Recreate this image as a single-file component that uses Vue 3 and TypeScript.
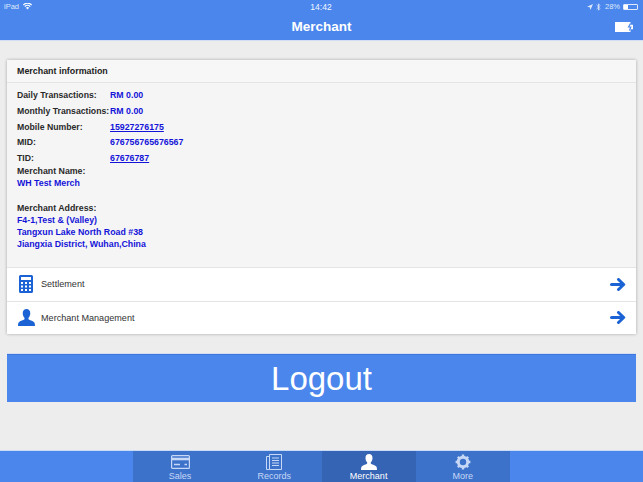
<template>
  <div class="page">
    <header class="topbar">
      <div class="status">
        <div class="status-left">
          <span>iPad</span>
          <svg class="wifi" viewBox="0 0 12 9" width="9" height="7">
            <path d="M6 8.600 3.900 6.200a3 3 0 0 1 4.200 0zM2.900 5.200 1.800 4a6 6 0 0 1 8.400 0L9.100 5.200a4.400 4.400 0 0 0-6.200 0zM.9 3 0 1.900a8.500 8.500 0 0 1 12 0L11.100 3a7.200 7.200 0 0 0-10.200 0z" fill="#fff" />
          </svg>
        </div>
        <span class="status-time">14:42</span>
        <div class="status-right">
          <svg viewBox="0 0 8 8" width="6" height="6"><path d="M8 0 4.500 8 3.700 4.300 0 3.500z" fill="#dfe9fb" /></svg>
          <svg class="bt" viewBox="0 0 6 10" width="5" height="8"><path d="M.6 2.500 5 6.800 3 9V1l2 2.200L.6 7.500" fill="none" stroke="#dfe9fb" stroke-width="1" /></svg>
          <span>28%</span>
          <span class="batt"><i class="batt-fill"></i></span>
        </div>
      </div>
      <div class="nav">
        <h1>Merchant</h1>
        <svg class="nav-batt" viewBox="0 0 18 10" width="18" height="10">
          <path d="M0 0h15.500v2.800H18v4.400h-2.500V10H0z" fill="#fff" />
          <path d="M15.500 1.500 13.600 5h2.200l-1.300 3.500" fill="none" stroke="#4a86ec" stroke-width="1.200" />
        </svg>
      </div>
    </header>

    <main class="content">
      <section class="card">
        <div class="card-title">Merchant information</div>
        <div class="info">
          <div v-for="row in infoRows" :key="row.label" class="info-row">
            <span class="info-label">{{ row.label }}</span>
            <a v-if="row.link" class="info-value link">{{ row.value }}</a>
            <span v-else class="info-value">{{ row.value }}</span>
          </div>
          <div class="block">
            <div class="block-line dark">Merchant Name:</div>
            <div class="block-line blue">WH Test Merch</div>
          </div>
          <div class="block address">
            <div class="block-line dark">Merchant Address:</div>
            <div v-for="line in addressLines" :key="line" class="block-line blue">{{ line }}</div>
          </div>
        </div>
        <div class="action">
          <span class="action-slot">
            <svg viewBox="0 0 14 18" width="14" height="18">
              <path fill-rule="evenodd" fill="#1b62d4" d="M1.500 0h11A1.500 1.500 0 0 1 14 1.500v15a1.500 1.500 0 0 1-1.500 1.500h-11A1.500 1.500 0 0 1 0 16.500v-15A1.500 1.500 0 0 1 1.500 0zM2 2v3h10V2zM2 7v2h2V7zm4 0v2h2V7zm4 0v2h2V7zM2 10.500v2h2v-2zm4 0v2h2v-2zm4 0v2h2v-2zM2 14v2h2v-2zm4 0v2h2v-2zm4 0v2h2v-2z" />
            </svg>
          </span>
          <span class="action-text">Settlement</span>
          <svg viewBox="0 0 16 13" width="16" height="13">
            <path d="M1.500 6.500h11M8.500 1.500l5.200 5-5.200 5" fill="none" stroke="#1b62d4" stroke-width="3" stroke-linecap="round" stroke-linejoin="round" />
          </svg>
        </div>
        <div class="action">
          <span class="action-slot">
            <svg viewBox="0 0 18 18" width="17" height="17">
              <path fill="#1b62d4" d="M9 0c2.500 0 4 1.800 4 4.400 0 2-.8 3.700-1.800 4.800-.3.900-.1 1.700.6 2.200 1.400.8 4.400 1.300 5.500 2.800.4.600.7 2 .7 3.800H0c0-1.800.3-3.200.7-3.800 1.100-1.500 4.100-2 5.500-2.800.7-.5.900-1.300.6-2.200C5.800 8.100 5 6.400 5 4.400 5 1.800 6.500 0 9 0z" />
            </svg>
          </span>
          <span class="action-text">Merchant Management</span>
          <svg viewBox="0 0 16 13" width="16" height="13">
            <path d="M1.500 6.500h11M8.500 1.500l5.200 5-5.200 5" fill="none" stroke="#1b62d4" stroke-width="3" stroke-linecap="round" stroke-linejoin="round" />
          </svg>
        </div>
      </section>

      <button class="logout" type="button">Logout</button>
    </main>

    <footer class="tabbar">
      <div class="tabs">
        <div v-for="tab in tabs" :key="tab" class="tab" :class="{ active: tab === 'Merchant' }">
          <span class="tab-icon">
            <svg v-if="tab === 'Sales'" viewBox="0 0 19 14" width="19" height="14">
              <rect x=".6" y=".6" width="17.800" height="12.800" rx="1" fill="none" stroke="#c6d8f6" stroke-width="1.200" />
              <path d="M1 4h17" stroke="#c6d8f6" stroke-width="2.600" />
              <path d="M3 9.500h6M13.500 9.500H16" stroke="#c6d8f6" stroke-width="1.300" />
            </svg>
            <svg v-else-if="tab === 'Records'" viewBox="0 0 16 16" width="16" height="16">
              <path fill="none" stroke="#c6d8f6" stroke-width="1" d="M3.500.5h12v15h-12zM3.500 2.500H.5v13h3" />
              <path fill="none" stroke="#c6d8f6" stroke-width="1.200" d="M6 4h7M6 6.500h7M6 9h7M6 11.500h7" />
            </svg>
            <svg v-else-if="tab === 'Merchant'" viewBox="0 0 16 16" width="16" height="16">
              <path fill="#fff" d="M8 0c2.200 0 3.500 1.600 3.500 3.900 0 1.800-.7 3.300-1.600 4.300-.3.800-.1 1.500.5 1.900 1.200.7 3.900 1.200 4.900 2.500.4.500.7 1.700.7 3.400H0c0-1.700.3-2.900.7-3.400 1-1.300 3.700-1.800 4.900-2.500.6-.4.800-1.100.5-1.900C5.200 7.200 4.500 5.700 4.500 3.900 4.500 1.600 5.800 0 8 0z" />
            </svg>
            <svg v-else viewBox="0 0 16 16" width="16" height="16">
              <circle cx="8" cy="8" r="4.700" fill="none" stroke="#c6d8f6" stroke-width="3" />
              <path d="M8 .6v2M8 13.400v2M.6 8h2M13.400 8h2M2.800 2.800l1.400 1.400M11.800 11.800l1.400 1.400M2.800 13.200l1.400-1.400M11.800 4.200l1.400-1.400" stroke="#c6d8f6" stroke-width="2.400" />
            </svg>
          </span>
          <span class="tab-label">{{ tab }}</span>
        </div>
      </div>
    </footer>
  </div>
</template>

<script setup lang="ts">
interface InfoRow {
  label: string
  value: string
  link?: boolean
}

const infoRows: InfoRow[] = [
  { label: 'Daily Transactions:', value: 'RM 0.00' },
  { label: 'Monthly Transactions:', value: 'RM 0.00' },
  { label: 'Mobile Number:', value: '15927276175', link: true },
  { label: 'MID:', value: '676756765676567' },
  { label: 'TID:', value: '67676787', link: true }
]

const addressLines = ['F4-1,Test & (Valley)', 'Tangxun Lake North Road #38', 'Jiangxia District, Wuhan,China']

const tabs = ['Sales', 'Records', 'Merchant', 'More']
</script>

<style>
html,
body {
  margin: 0;
  background: #ededed;
}
</style>

<style scoped>
.page {
  width: 643px;
  height: 482px;
  display: flex;
  flex-direction: column;
  overflow: hidden;
  background: #ededed;
  font-family: 'Liberation Sans', Arial, sans-serif;
}

.topbar {
  height: 41px;
  flex-shrink: 0;
  box-sizing: border-box;
  background: #4a86ec;
  border-bottom: 1px solid #d2def2;
  color: #fff;
}

.status {
  height: 13px;
  padding: 0 5px 0 4px;
  display: grid;
  grid-template-columns: 1fr auto 1fr;
  align-items: center;
  font-size: 7.500px;
  color: #dfe9fb;
}

.status-left {
  display: flex;
  align-items: center;
  gap: 4px;
}

.status-time {
  color: #f2f6fe;
  font-size: 8.500px;
}

.status-right {
  display: flex;
  align-items: center;
  justify-content: flex-end;
  gap: 3px;
}

.status-right .bt {
  margin-right: 1px;
}

.batt {
  width: 15px;
  height: 6px;
  box-sizing: border-box;
  border: 1px solid #dfe9fb;
  border-radius: 1px;
  display: block;
}

.batt-fill {
  display: block;
  width: 4px;
  height: 4px;
  background: #fff;
}

.nav {
  height: 27px;
  display: flex;
  align-items: center;
  justify-content: center;
  position: relative;
}

.nav h1 {
  margin: 0;
  font-size: 13.500px;
  font-weight: 700;
}

.nav-batt {
  position: absolute;
  right: 10px;
  top: 9px;
}

.content {
  flex: 1;
  padding: 19px 7px 0;
}

.card {
  height: 274px;
  display: flex;
  flex-direction: column;
  background: #fff;
  box-shadow: 0 0 3px rgba(0, 0, 0, 0.3);
}

.card-title {
  height: 22px;
  line-height: 22px;
  padding-left: 10px;
  background: #f7f7f7;
  border-bottom: 1px solid #e4e4e4;
  font-size: 8.900px;
  font-weight: 700;
  color: #222;
}

.info {
  flex: 1;
  padding: 5px 10px 0;
  background: #f5f5f6;
  font-size: 8.800px;
  font-weight: 700;
  color: #2a2a2a;
}

.info-row {
  height: 15.800px;
  line-height: 15.800px;
  display: flex;
}

.info-label {
  width: 93px;
  flex-shrink: 0;
  white-space: nowrap;
  font-size: 8.700px;
}

.info-value {
  color: #1414d8;
}

.info-value.link {
  text-decoration: underline;
}

.block-line {
  height: 12px;
  line-height: 12px;
  white-space: nowrap;
}

.block {
  margin-top: -2px;
}

.block.address {
  margin-top: 13px;
}

.dark {
  color: #2a2a2a;
}

.blue {
  color: #1414d8;
}

.action {
  height: 33.500px;
  flex-shrink: 0;
  box-sizing: border-box;
  display: flex;
  align-items: center;
  padding: 0 10px;
  background: #fff;
  border-top: 1px solid #e4e4e4;
}

.action-slot {
  width: 18px;
  flex-shrink: 0;
  display: flex;
  justify-content: center;
}

.action-text {
  flex: 1;
  margin-left: 6px;
  font-size: 9.100px;
  color: #333;
}

.logout {
  display: block;
  width: 100%;
  height: 48px;
  margin-top: 20px;
  padding: 0;
  border: 0;
  border-top: 1px solid #3f78dc;
  box-shadow: 0 -1px 0 #d5dff0;
  background: #4a86ec;
  color: #fff;
  font-family: inherit;
  font-size: 33px;
}

.tabbar {
  height: 32px;
  flex-shrink: 0;
  box-sizing: border-box;
  display: flex;
  justify-content: center;
  background: #4a86ec;
  border-top: 1px solid #c9dbf7;
}

.tabs {
  width: 377px;
  display: flex;
  background: #3d72cb;
}

.tab {
  flex: 1;
  display: flex;
  flex-direction: column;
  align-items: center;
  height: 31px;
  box-sizing: border-box;
  padding-top: 3px;
  color: #c6d8f6;
}

.tab.active {
  background: #3564b4;
  color: #fff;
}

.tab-icon {
  height: 16px;
  display: flex;
  align-items: center;
}

.tab-label {
  height: 11px;
  line-height: 11px;
  margin-top: 1px;
  font-size: 9px;
}
</style>
